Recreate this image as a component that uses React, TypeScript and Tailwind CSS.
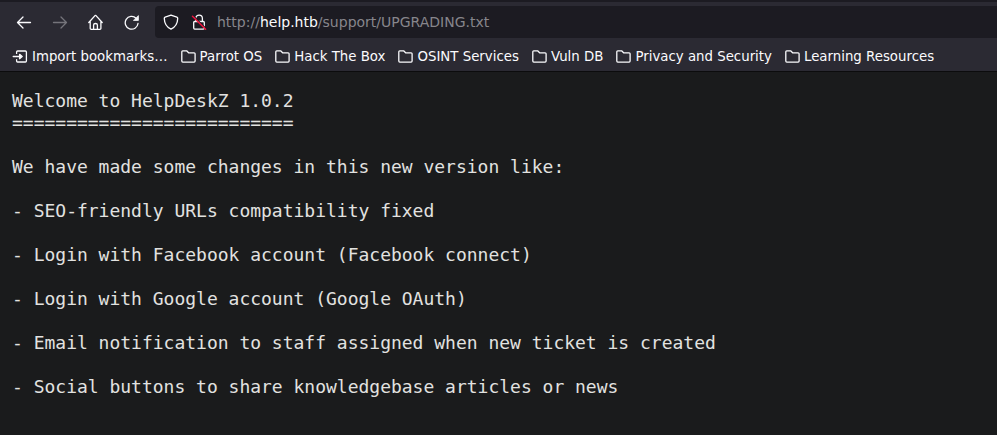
import React from "react";

const folders = [
  "Parrot OS",
  "Hack The Box",
  "OSINT Services",
  "Vuln DB",
  "Privacy and Security",
  "Learning Resources",
];

const notes = `Welcome to HelpDeskZ 1.0.2
==========================

We have made some changes in this new version like:

- SEO-friendly URLs compatibility fixed

- Login with Facebook account (Facebook connect)

- Login with Google account (Google OAuth)

- Email notification to staff assigned when new ticket is created

- Social buttons to share knowledgebase articles or news`;

function Icon({ children, className = "" }: { children: React.ReactNode; className?: string }) {
  return (
    <svg
      viewBox="0 0 16 16"
      className={"h-4 w-4 shrink-0 " + className}
      fill="none"
      stroke="currentColor"
      strokeWidth="1.3"
      strokeLinecap="round"
      strokeLinejoin="round"
    >
      {children}
    </svg>
  );
}

function Bookmark({ label, children }: { label: string; children: React.ReactNode }) {
  return (
    <div className="flex items-center gap-1">
      {children}
      <span className="whitespace-pre">{label}</span>
    </div>
  );
}

export default function App() {
  return (
    <div className="flex h-[435px] w-[997px] flex-col overflow-hidden bg-[#1a1b1c] font-['DejaVu_Sans',sans-serif] text-[13.333px] text-[#fbfbfe]">
      <header className="flex h-[72px] shrink-0 flex-col border-t-2 border-b border-t-[#1c1b22] border-b-[#0c0c0d] bg-[#2b2a33]">
        <div className="flex h-10 items-center pl-4">
          <nav className="flex w-[139px] items-center gap-5">
            <Icon>
              <path d="M14.5 8.5H1.5M7 3L1.5 8.5L7 14" />
            </Icon>
            <Icon className="text-[#75747b]">
              <path d="M1.5 8.5H14.5M9 3L14.5 8.5L9 14" />
            </Icon>
            <Icon>
              <path d="M.8 8.5L7 1.6Q7.5 1.2 8 1.6L14.2 8.5M2.2 7.5V14.5Q2.2 15.3 3.2 15.3H11.9Q12.9 15.3 12.9 14.5V7.5M5.6 15.2V11Q5.6 9.5 7.5 9.5T9.4 11V15.2" />
            </Icon>
            <Icon>
              <path d="M12.1 4.2A6.4 6.4 0 1 0 14 9.5" />
              <path d="M14.4 2V6.4H9.8Z" fill="currentColor" strokeWidth=".8" />
            </Icon>
          </nav>
          <div className="flex h-8 flex-1 items-center rounded-l bg-[#1c1b22] pl-2">
            <Icon>
              <path d="M8 1.1L13.9 3.2Q14.8 3.5 14.7 4.5C14.6 10 12.5 13 8 15.1C3.5 13 1.4 10 1.3 4.5Q1.2 3.5 2.1 3.2Z" />
            </Icon>
            <Icon className="ml-3">
              <path d="M4.8 7V4.4A3.3 3.3 0 0 1 11.4 4.4V7M3.7 7.5H12.3Q13.3 7.5 13.3 8.5V14.1Q13.3 15.1 12.3 15.1H3.7Q2.7 15.1 2.7 14.1V8.5Q2.7 7.5 3.7 7.5Z" />
              <path d="M2.5 2L15 14.5" stroke="#1c1b22" strokeWidth="1.2" />
              <path d="M1.5 2.2L14.6 15.3" stroke="#f0143f" strokeWidth="1.5" />
            </Icon>
            <span className="ml-[10px] whitespace-pre pb-px text-sm text-[#87868c]">
              http://<span className="text-[#fbfbfe]">help.htb</span>/support/UPGRADING.txt
            </span>
          </div>
        </div>
        <div className="flex h-[29px] items-center gap-3 pl-3">
          <Bookmark label="Import bookmarks…">
            <Icon>
              <path d="M4.6 5.4V4Q4.6 3 5.6 3H13.4Q14.4 3 14.4 4V13Q14.4 14 13.4 14H5.6Q4.6 14 4.6 13V11.6M1.2 8.5H8" />
              <path d="M7.6 6.3L10.2 8.5L7.6 10.7Z" fill="currentColor" />
            </Icon>
          </Bookmark>
          {folders.map((name) => (
            <Bookmark key={name} label={name}>
              <Icon>
                <path d="M2.8 2.8H6.6L8.6 4.8H14.1Q15.1 4.8 15.1 5.8V13.1Q15.1 14.1 14.1 14.1H2.8Q1.8 14.1 1.8 13.1V3.8Q1.8 2.8 2.8 2.8Z" />
              </Icon>
            </Bookmark>
          ))}
        </div>
      </header>
      <pre className="px-3 pt-[18px] font-['DejaVu_Sans_Mono',monospace] text-[17.99px] leading-[22px] text-[#e2e2e0]">
        {notes}
      </pre>
    </div>
  );
}
